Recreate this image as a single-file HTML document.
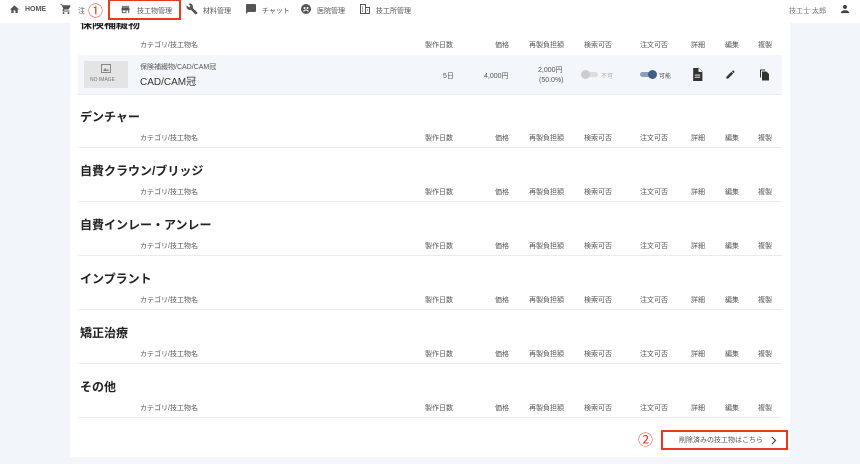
<!DOCTYPE html>
<html><head><meta charset="utf-8"><style>
*{margin:0;padding:0;box-sizing:border-box}
body{width:860px;height:464px;overflow:hidden;background:#f2f5fa;font-family:"Liberation Sans","Noto Sans CJK JP",sans-serif;color:#333;position:relative}
.a{position:absolute;white-space:nowrap}
.panel{position:absolute;left:70px;top:0;width:720px;height:457px;background:#fff}
.nav{position:absolute;left:0;top:0;width:860px;height:23px;background:#fff;z-index:5}
.nav .a{font-size:7px;color:#555;top:6px}
.h{font-size:12px;font-weight:bold;color:#222;left:80px}
.th{font-size:7px;color:#555}
.line{position:absolute;left:78px;width:704px;height:1px;background:#e8ebef}
.red{position:absolute;border:2px solid #e8391e}
</style></head><body>
<div class="panel"></div>
<div class="a h" style="top:15px">保険補綴物</div>
<div class="nav">
<svg class="a" style="left:9px;top:4px" width="11" height="11" viewBox="0 0 24 24"><path d="M10 20v-6h4v6h5v-8h3L12 3 2 12h3v8z" fill="#555"/></svg>
<div class="a" style="left:25px;font-weight:bold;top:6px">HOME</div>
<svg class="a" style="left:60px;top:3px" width="12" height="12" viewBox="0 0 24 24"><path d="M7 18a2 2 0 100 4 2 2 0 000-4zM1 2v2h2l3.6 7.6L5.2 14c-.1.3-.2.6-.2 1 0 1.1.9 2 2 2h12v-2H7.4l1.1-2h7.5c.8 0 1.4-.4 1.7-1l3.6-6.5-1.7-1H5.2l-.9-2zm16 16a2 2 0 100 4 2 2 0 000-4z" fill="#555"/></svg>
<div class="a" style="left:78px">注</div>
<div class="a" style="left:88px;top:0;font-size:15px;color:#e8391e">①</div>
<div class="red" style="left:108px;top:-1px;width:73px;height:21px"></div>
<svg class="a" style="left:120px;top:4px" width="11" height="11" viewBox="0 0 24 24"><path d="M4 4h16v2H4zm16 3H4l-1 5v2h1v6h10v-6h4v6h2v-6h1v-2zm-8 11H6v-4h6z" fill="#555"/></svg>
<div class="a" style="left:137px">技工物管理</div>
<svg class="a" style="left:186px;top:3px" width="12" height="12" viewBox="0 0 24 24"><path d="M22.7 19l-9.1-9.1c.9-2.3.4-5-1.5-6.9-2-2-5-2.4-7.4-1.3L9 6 6 9 1.6 4.7C.4 7.1.9 10.1 2.9 12.1c1.9 1.9 4.6 2.4 6.9 1.5l9.1 9.1c.4.4 1 .4 1.4 0l2.3-2.3c.5-.4.5-1.1.1-1.4z" fill="#555"/></svg>
<div class="a" style="left:203px">材料管理</div>
<svg class="a" style="left:245px;top:3px" width="12" height="12" viewBox="0 0 24 24"><path d="M20 2H4c-1.1 0-2 .9-2 2v18l4-4h14c1.1 0 2-.9 2-2V4c0-1.1-.9-2-2-2z" fill="#555"/></svg>
<div class="a" style="left:262px">チャット</div>
<svg class="a" style="left:300px;top:3px" width="12" height="12" viewBox="0 0 24 24"><circle cx="12" cy="12" r="10" fill="#555"/><circle cx="9" cy="10" r="2" fill="#fff"/><circle cx="15" cy="10" r="2" fill="#fff"/><path d="M7 17c1-2 3-3 5-3s4 1 5 3" stroke="#fff" stroke-width="2" fill="none"/></svg>
<div class="a" style="left:317px">医院管理</div>
<svg class="a" style="left:359px;top:3px" width="12" height="12" viewBox="0 0 24 24"><path d="M3 3h10v18H3zm10 6h8v12h-8" fill="none" stroke="#555" stroke-width="2"/><path d="M6 7h2v2H6zm0 4h2v2H6zm0 4h2v2H6zm10-2h2v2h-2z" fill="#555"/></svg>
<div class="a" style="left:376px">技工所管理</div>
<div class="a" style="left:789px;color:#777">技工士 太郎</div>
<svg class="a" style="left:840px;top:4px" width="10" height="10" viewBox="0 0 24 24"><circle cx="12" cy="7" r="5" fill="#444"/><path d="M2 22c0-5 5-7 10-7s10 2 10 7z" fill="#444"/></svg>
</div>

<div id="s"></div>
<div class="a" style="left:78px;top:55px;width:704px;height:39px;background:#f3f7fb"></div>
<div class="a" style="left:84px;top:61px;width:44px;height:27px;background:#e4e4e4"></div>
<svg class="a" style="left:101px;top:64px" width="10" height="9" viewBox="0 0 10 9"><rect x=".5" y=".5" width="9" height="8" fill="none" stroke="#888"/><path d="M2 7l2-3 2 2 1-1 1 2z" fill="#888"/></svg>
<div class="a" style="left:90px;top:77px;font-size:5px;color:#777">NO IMAGE</div>
<div class="a" style="left:140px;top:62px;font-size:7px;color:#555">保険補綴物/CAD/CAM冠</div>
<div class="a" style="left:140px;top:73px;font-size:10px;color:#333">CAD/CAM冠</div>
<div class="a" style="left:443px;top:71px;font-size:7px;color:#555">5日</div>
<div class="a" style="left:484px;top:71px;font-size:7px;color:#555">4,000円</div>
<div class="a" style="left:538px;top:65px;font-size:7px;color:#555">2,000円</div>
<div class="a" style="left:539px;top:77px;font-size:7px;color:#555">(50.0%)</div>
<div class="a" style="left:582px;top:72px;width:16px;height:5px;border-radius:3px;background:#ddd"></div>
<div class="a" style="left:581px;top:70px;width:9px;height:9px;border-radius:50%;background:#ccc"></div>
<div class="a" style="left:601px;top:71px;font-size:6px;color:#aaa">不可</div>
<div class="a" style="left:640px;top:72px;width:16px;height:5px;border-radius:3px;background:#8aa0b8"></div>
<div class="a" style="left:648px;top:70px;width:9px;height:9px;border-radius:50%;background:#3e5f85"></div>
<div class="a" style="left:659px;top:71px;font-size:6px;color:#555">可能</div>
<svg class="a" style="left:692px;top:68px" width="11" height="13" viewBox="0 0 20 24"><path d="M2 0h11l6 6v18H2zm10 1v6h6M5 13h10M5 17h10" fill="#333"/><path d="M5 13h10M5 17h10" stroke="#fff" stroke-width="1.5"/><path d="M12 0v7h7" fill="#fff"/></svg>
<svg class="a" style="left:725px;top:69px" width="11" height="11" viewBox="0 0 24 24"><path d="M3 17.2V21h3.8L17.8 9.9l-3.8-3.8zM20.7 7c.4-.4.4-1 0-1.4l-2.3-2.3c-.4-.4-1-.4-1.4 0l-1.8 1.8 3.8 3.8z" fill="#333"/></svg>
<svg class="a" style="left:758px;top:68px" width="12" height="13" viewBox="0 0 24 24"><path d="M4 2h10v2H6v14H4z" fill="#333"/><path d="M8 6h9l5 5v13H8z" fill="#333"/></svg>

<script>
var cols=[["カテゴリ/技工物名",140,0],["製作日数",453,1],["価格",509,1],["再製負担額",564,1],["検索可否",584,0],["注文可否",640,0],["詳細",691,0],["編集",725,0],["複製",758,0]];
var h="";
function hdr(y){cols.forEach(function(c){h+='<div class="a th" style="top:'+y+'px;'+(c[2]?'right:'+(860-c[1])+'px':'left:'+c[1]+'px')+'">'+c[0]+'</div>';});}
hdr(40);
var names=["デンチャー","自費クラウン/ブリッジ","自費インレー・アンレー","インプラント","矯正治療","その他"];
names.forEach(function(n,i){var y=108+i*54;h+='<div class="a h" style="top:'+y+'px">'+n+'</div>';hdr(y+25);h+='<div class="line" style="top:'+(y+39)+'px"></div>';});
document.getElementById("s").outerHTML=h;
</script>
<div class="line" style="top:94px"></div>
<div class="a" style="left:638px;top:429px;font-size:15px;color:#e8391e">②</div>
<div class="red" style="left:661px;top:430px;width:127px;height:20px"></div>
<div class="a" style="left:679px;top:435px;font-size:7px;color:#555">削除済みの技工物はこちら</div>
<svg class="a" style="left:771px;top:436px" width="6" height="9" viewBox="0 0 6 9"><path d="M1 1l3.5 3.5L1 8" stroke="#444" stroke-width="1.2" fill="none"/></svg>
</body></html>
